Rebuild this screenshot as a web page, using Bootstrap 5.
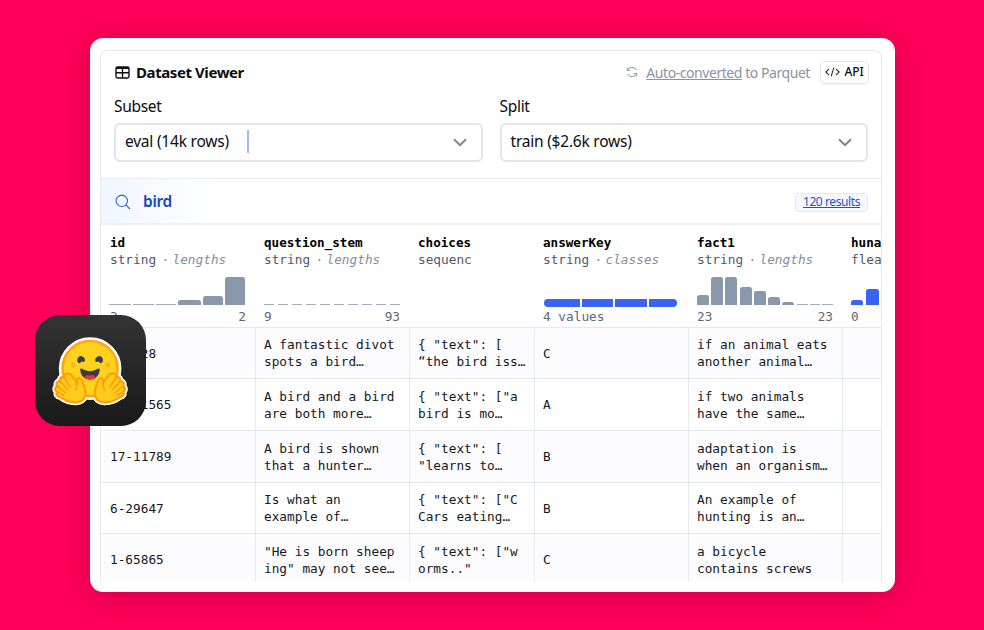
<!DOCTYPE html>
<html lang="en">
<head>
<meta charset="utf-8">
<meta name="viewport" content="width=device-width, initial-scale=1">
<title>Dataset Viewer</title>
<link rel="stylesheet" href="https://cdn.jsdelivr.net/npm/bootstrap@5.3.0/dist/css/bootstrap.min.css">
<style>
body{background:#ff0058;width:984px;height:630px;overflow:hidden;font-family:"Noto Sans",sans-serif;color:#0b0d12;line-height:1}
.stage{padding:38px 89px 38px 90px;height:630px}
.shell{height:554px;border-radius:13px;padding:12px 13px 10px 10px;box-shadow:0 5px 32px rgba(60,0,20,.24)}
.panel{height:532px;border:1px solid #e6e8ec;border-bottom:0;border-radius:8px 8px 0 0;overflow:hidden}
.topbar{height:42px;padding:0 12px 0 14px}
.ttl{font-size:15px;font-weight:700;letter-spacing:-.42px;margin-left:6px}
.auto{font-size:14px;color:#8a92a3;letter-spacing:-.44px;padding-top:1px}
.api{height:23px;width:49px;margin-left:10px;border:1px solid #e3e5e9;border-radius:5px;font-size:12px;font-weight:500;letter-spacing:-.1px;box-shadow:0 1px 1px rgba(0,0,0,.05)}
.pickers{height:86px;padding:0 13px;gap:17px;border-bottom:1px solid #e9ebee}
.lbl{font-size:15.5px;height:30px;line-height:27px;letter-spacing:-.3px}
.pick{height:39px;border:2px solid #e3e6e9;border-radius:6px;padding:0 14px 0 9px;font-size:15.5px;letter-spacing:-.22px}
.pick span{position:relative;top:-1px}
.caret-line{width:2px;height:23px;background:#a3b9f5;margin-left:18px}
.search{height:46px;border-bottom:2px solid #eff0f2;padding:2px 13px 0 14px;background:linear-gradient(90deg,#f0f5ff,#fff 108px)}
.word{font-size:15.5px;font-weight:600;color:#1546bd;letter-spacing:-.3px;margin-left:12px}
.hits{height:19px;width:73px;border:1px solid #dfe7fb;border-radius:4px;background:#f5f9ff;font-size:12px;color:#2450c8;letter-spacing:-.4px;text-decoration:underline}
.gridrow{display:grid;grid-template-columns:155px 154px 125px 154px 154px 38px;font-family:"DejaVu Sans Mono","Liberation Mono",monospace;font-size:12.75px}
.heads{height:103px;border-bottom:1px solid #e6e9ec}
.hcell{padding:9px 8px 0;white-space:nowrap;overflow:hidden}
.gridrow>:first-child{padding-left:9px}
.hcell b,.hcell .kind{display:block;height:17px;line-height:17px}
.hcell b{color:#000;font-size:12.6px}
.kind{color:#50586a}
.kind i{color:#858d9c}
.kind em{letter-spacing:-2.2px;font-style:normal}
.hist{height:28px;margin-top:9px;margin-bottom:3px}
.hist span{background:#8998aa;border-radius:2.5px 2.5px 0 0;flex:none}
.hist .flat{border-radius:0;background:#a3acb8}
.hist.blue span{background:#3a62f5}
.seg{height:8px;width:133px;margin:31px 0 1px 1px;gap:2px}
.seg span{background:#3a62f5}
.range{color:#5d677a;height:16px;line-height:17px}
.datarow{height:52px;border-bottom:1px solid #e6e9ec;flex:none;color:#16181d}
.datarow.short{height:51px}
.datarow.tint{background:#fcfcfe}
.datarow>div{border-right:1px solid #e8ebee;padding:2px 8px 0;display:flex;align-items:center;line-height:16.8px;white-space:pre}
.datarow>div:last-child{border-right:0}
.app{position:absolute;left:35px;top:315px;width:111px;height:111px;border-radius:25px;background:linear-gradient(#333,#191919)}
</style>
<script src="https://cdn.jsdelivr.net/npm/bootstrap@5.3.0/dist/js/bootstrap.bundle.min.js"></script>
</head>
<body>
<main class="stage">
<div class="shell bg-white">
<section class="panel">
  <div class="topbar d-flex align-items-center justify-content-between">
    <div class="d-flex align-items-center">
      <svg width="15" height="13" viewBox="0 0 15 13" fill="none" stroke="#111" stroke-width="1.4"><rect x="1" y="1" width="13" height="11" rx="1.4"/><path d="M1 2h13" stroke-width="2"/><path d="M1 6.7h13M7.5 2v10"/></svg>
      <span class="ttl">Dataset Viewer</span>
    </div>
    <div class="d-flex align-items-center">
      <svg width="12" height="12" viewBox="0 0 12 12" fill="none" stroke="#8a92a3" stroke-width="1"><path d="M1.400 4.300A5 5 0 0 1 10.400 4M10.600 7.700A5 5 0 0 1 1.600 8M1.300 1.500v2.900h2.900M10.700 10.500V7.600H7.800"/></svg>
      <span class="auto text-nowrap ms-2"><u>Auto-converted</u> to Parquet</span>
      <span class="api d-flex align-items-center justify-content-center">
        <svg width="15" height="10" viewBox="0 0 15 10" fill="none" stroke="#333" stroke-width="1.1"><path d="M4 1.800L.9 5 4 8.200M11 1.800L14.100 5 11 8.200M8.800.6L6.200 9.400"/></svg>
        <span class="ms-1">API</span></span>
    </div>
  </div>
  <div class="pickers d-flex">
    <div class="flex-fill w-50"><div class="lbl">Subset</div>
      <div class="pick d-flex align-items-center"><span>eval (14k rows)</span><span class="caret-line"></span>
        <svg class="ms-auto" width="14" height="9" viewBox="0 0 14 9" fill="none" stroke="#7c8596" stroke-width="2"><path d="M1 1.200l6 6 6-6"/></svg></div></div>
    <div class="flex-fill w-50"><div class="lbl">Split</div>
      <div class="pick d-flex align-items-center"><span>train ($2.6k rows)</span>
        <svg class="ms-auto" width="14" height="9" viewBox="0 0 14 9" fill="none" stroke="#7c8596" stroke-width="2"><path d="M1 1.200l6 6 6-6"/></svg></div></div>
  </div>
  <div class="search d-flex align-items-center">
    <svg width="16" height="16" viewBox="0 0 16 16" fill="none" stroke="#3263cf" stroke-width="1.1"><circle cx="6.800" cy="6.800" r="5.700"/><path d="M11 11l4 4"/></svg>
    <span class="word">bird</span>
    <span class="hits ms-auto d-flex align-items-center justify-content-center text-nowrap">120 results</span>
  </div>
  <div class="gridrow heads">
    <div class="hcell"><b>id</b><span class="kind">string<i><em> · </em>lengths</i></span>
      <div class="hist d-flex align-items-end" style="margin-left:-1px;gap:2px"><span class="flat" style="width:22px;height:1px"></span><span class="flat" style="width:21px;height:1px"></span><span class="flat" style="width:20px;height:1px"></span><span style="width:23px;height:5px"></span><span style="width:20px;height:9px"></span><span style="width:20px;height:28px"></span></div>
      <div class="range d-flex justify-content-between" style="width:136px"><span>3</span><span>2</span></div></div>
    <div class="hcell"><b>question_stem</b><span class="kind">string<i><em> · </em>lengths</i></span>
      <div class="hist d-flex align-items-end justify-content-between" style="width:136px"><span class="flat" style="width:10px;height:1px"></span><span class="flat" style="width:10px;height:1px"></span><span class="flat" style="width:10px;height:1px"></span><span class="flat" style="width:10px;height:1px"></span><span class="flat" style="width:10px;height:1px"></span><span class="flat" style="width:10px;height:1px"></span><span class="flat" style="width:10px;height:1px"></span><span class="flat" style="width:10px;height:1px"></span><span class="flat" style="width:10px;height:1px"></span><span class="flat" style="width:10px;height:1px"></span></div>
      <div class="range d-flex justify-content-between" style="width:136px"><span>9</span><span>93</span></div></div>
    <div class="hcell"><b>choices</b><span class="kind">sequenc</span></div>
    <div class="hcell"><b>answerKey</b><span class="kind">string<i><em> · </em>classes</i></span>
      <div class="seg d-flex"><span class="rounded-start-pill" style="width:36px"></span><span style="width:31px"></span><span style="width:32px"></span><span class="rounded-end-pill" style="width:28px"></span></div>
      <div class="range">4 values</div></div>
    <div class="hcell"><b>fact1</b><span class="kind">string<i><em> · </em>lengths</i></span>
      <div class="hist d-flex align-items-end justify-content-between" style="width:136px"><span style="width:12px;height:10px"></span><span style="width:12px;height:28px"></span><span style="width:12px;height:28px"></span><span style="width:12px;height:18px"></span><span style="width:12px;height:14px"></span><span style="width:12px;height:8px"></span><span style="width:12px;height:3px"></span><span class="flat" style="width:11px;height:1px"></span><span class="flat" style="width:10px;height:1px"></span><span class="flat" style="width:11px;height:1px"></span></div>
      <div class="range d-flex justify-content-between" style="width:136px"><span>23</span><span>23</span></div></div>
    <div class="hcell pe-0"><b>huna</b><span class="kind">flea</span>
      <div class="hist blue d-flex align-items-end" style="gap:3px"><span style="width:12px;height:5px"></span><span style="width:13px;height:16px"></span></div>
      <div class="range">0</div></div>
  </div>
  <div class="gridrow datarow short tint"><div>13-128</div><div>A fantastic divot
spots a bird…</div><div>{ "text": [
“the bird iss…</div><div>C</div><div>if an animal eats
another animal…</div><div></div></div>
  <div class="gridrow datarow"><div>10-21565</div><div>A bird and a bird
are both more…</div><div>{ "text": ["a
bird is mo…</div><div>A</div><div>if two animals
have the same…</div><div></div></div>
  <div class="gridrow datarow tint"><div>17-11789</div><div>A bird is shown
that a hunter…</div><div>{ "text": [
"learns to…</div><div>B</div><div>adaptation is
when an organism…</div><div></div></div>
  <div class="gridrow datarow short"><div>6-29647</div><div>Is what an
example of…</div><div>{ "text": ["C
Cars eating…</div><div>B</div><div>An example of
hunting is an…</div><div></div></div>
  <div class="gridrow datarow tint"><div>1-65865</div><div>"He is born sheep
ing" may not see…</div><div>{ "text": ["w
orms.."</div><div>C</div><div>a bicycle
contains screws</div><div></div></div>
</section>
</div>
</main>
<div class="app">
  <svg width="111" height="111" viewBox="0 0 111 111">
    <defs><path id="palm" d="M19 48.500C15.500 47 12 49.500 13 54C9.500 51.500 5.500 54 7.500 59C3.500 57.500 .5 61.500 3.500 65.500C0 66-.5 70.500 3 73C1 76 3 79 7 79.500C13 84 22 87.500 30 86.500C39 85.500 42.500 79 40.500 70C39.500 64 37 60 36 57C34.500 53 29.500 53.500 30 58L29.800 61C27 56 24 50 19 48.500Z"/>
    <g id="hand"><use href="#palm" fill="#ffcb1c" stroke="#ff9d0b" stroke-width="2.800"/><path d="M13 54L21 66.500M7.500 59L17.500 70M3.500 65.500L14.500 74M3 73L12.500 77.500M29.800 61C30.500 64 28.500 66 28 70" fill="none" stroke="#ff9d0b" stroke-width="1.900" stroke-linecap="round"/></g></defs>
    <g transform="translate(19.700 22.300) scale(.75)">
      <g fill="#fff" stroke="#fff" stroke-width="7.500" stroke-linejoin="round"><circle cx="47.200" cy="41.750" r="38"/><use href="#palm"/><use href="#palm" transform="translate(94.400) scale(-1 1)"/></g>
      <circle cx="47.200" cy="41.750" r="36.750" fill="#ffd21e" stroke="#ffa716" stroke-width="3.500"/>
      <g fill="#3a3b45"><path d="M58.500 32.300c1.300.45 1.800 3.070 3.070 2.380a5 5 0 1 0-6.760-2.070c.6 1.150 2.550-.72 3.690-.31ZM35.900 32.300c-1.300.45-1.800 3.070-3.070 2.380a5 5 0 1 1 6.760-2.070c-.6 1.150-2.550-.72-3.690-.31Z"/><path d="M47 56.300C56.800 56.300 60 47.500 60 43C60 40.700 58.400 41.400 55.900 42.700C53.500 43.800 50.400 45.400 47 45.400C43.500 45.400 40.400 43.800 38.100 42.700C35.500 41.400 34 40.700 34 43C34 47.500 37.200 56.300 47 56.300Z"/></g>
      <path d="M39.500 54C41 50 44.500 49 47 51.500C49.500 49 53 50 54.500 54C49.500 57.200 44.500 57.200 39.500 54Z" fill="#f2303f"/>
      <g fill="#ffb01a"><circle cx="70.700" cy="37" r="3.250"/><circle cx="24.200" cy="37" r="3.250"/></g>
      <use href="#hand"/><use href="#hand" transform="translate(94.400) scale(-1 1)"/>
    </g>
  </svg>
</div>
</body>
</html>
